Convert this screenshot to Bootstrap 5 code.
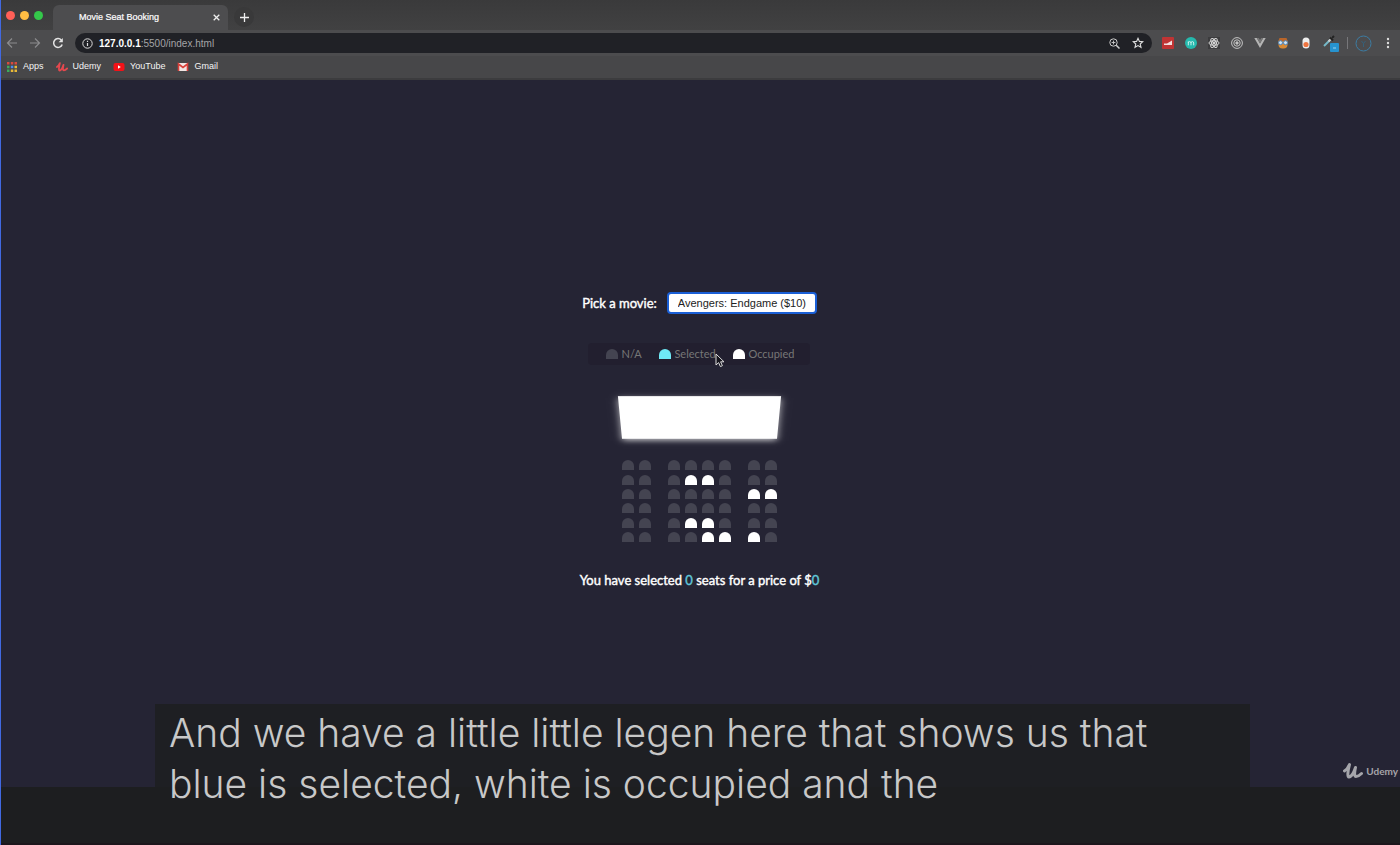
<!DOCTYPE html>
<html lang="en">
<head>
<meta charset="utf-8">
<meta name="viewport" content="width=device-width, initial-scale=1">
<title>Movie Seat Booking</title>
<link href="https://cdn.jsdelivr.net/npm/bootstrap@5.3.0/dist/css/bootstrap.min.css" rel="stylesheet">
<style>
  body { background: #1d1e20; border-left: 1px solid #4169e1; font-family: "Liberation Sans", Arial, sans-serif; overflow: hidden; }
  button { background: none; border: 0; padding: 0; color: inherit; line-height: 0; }
  svg { display: block; flex: none; }
  .tab-strip { height: 30px; background: linear-gradient(#3a3a3b, #414142); padding-left: 5px; }
  .lights { gap: 5px; width: 47px; }
  .light { width: 9px; height: 9px; border-radius: 50%; }
  .browser-tab { width: 175px; height: 25px; background: #4d4d4f; border-radius: 6px 6px 0 0; padding: 0 8px 0 26px; color: #fff; font-size: 9px; -webkit-text-stroke: .2px #fff; }
  .new-tab { width: 20px; height: 20px; border-radius: 50%; background: #39393a; margin: 4px 0 0 6px; }
  .tool-row { height: 26px; background: #4c4c4e; color: #d0d0d0; padding: 0 7px 0 5px; }
  .tool-buttons { gap: 11px; }
  .address { height: 20px; border-radius: 10px; background: #202126; padding: 0 8px 0 7px; font-size: 10px; margin-left: 11px; }
  .address label { color: #fff; font-weight: 700; margin-left: 6px; }
  .address input { background: none; border: 0; outline: 0; padding: 0; color: #a4a4a7; min-width: 0; }
  .extensions { gap: 11px; margin-left: 10px; }
  .account { gap: 7px; margin-left: 8px; }
  .marks-row { height: 24px; background: #474749; border-bottom: 2px solid #3c3c3e; padding-left: 5px; gap: 12px; font-size: 9px; }
  .marks-row a { color: #f4f4f4; gap: 5px; }
  .site { background: #252434; color: #fff; font-family: Lato, "Liberation Sans", sans-serif; font-size: 13px; }
  .strong-text { font-weight: 400; -webkit-text-stroke: .4px currentColor; }
  .booking { margin: 16px 2px 0 0; }
  .movie-select { appearance: none; width: 150px; height: 22px; border: 2px solid #1a5fd6; border-radius: 4px; background: #fff; color: #222; padding: 0 0 0 9px; margin-left: 10px; font-family: "Liberation Sans", Arial, sans-serif; font-size: 11px; outline: 0; }
  .legend-box { width: 222px; height: 22px; margin: 29px 0 23px; padding: 0 16px 0 18px; background: #221f2f; border-radius: 4px; color: #777; font-size: 11px; }
  .legend-box li { gap: 3px; }
  .pointer { left: 127px; top: 10px; }
  .stage { perspective: 830px; }
  .screen { width: 159px; height: 60px; background: #fff; transform: rotateX(-45deg); box-shadow: 0 3px 8px rgba(255,255,255,.7); }
  .seats { height: 82px; margin: 12px 0 29px; }
  .seat-line { gap: 5px; }
  .seat { appearance: none; width: 12px; height: 10px; margin: 0; background: #444451; border-radius: 6px 6px 0 0; }
  .seat:checked, .seat.is-selected { background: #6feaf6; }
  .seat.is-occupied { background: #fff; }
  .seat-line .seat:nth-child(2), .seat-line .seat:nth-child(6) { margin-right: 12px; }
  .amount { color: #5fc6d8; }
  .watermark { right: 2px; bottom: 7px; gap: 3px; color: #a5a5aa; font-size: 10px; font-weight: 700; }
  .below { height: 58px; border-bottom: 2px solid #1c161c; }
  .subtitle { left: 154px; right: 150px; bottom: 2px; height: 139px; padding: 3px 14px; background: linear-gradient(#1e1f23 83px, #1d1e20 83px); color: #c8c8c8; font-family: Inter, "Liberation Sans", sans-serif; font-weight: 300; font-size: 39px; line-height: 51px; }
</style>
<script src="https://cdn.jsdelivr.net/npm/bootstrap@5.3.0/dist/js/bootstrap.bundle.min.js"></script>
</head>
<body class="vh-100 d-flex flex-column position-relative">
<header>
  <div class="tab-strip d-flex align-items-end">
    <div class="lights d-flex align-self-center">
      <span class="light" style="background:#ff5f57"></span><span class="light" style="background:#ffbd43"></span><span class="light" style="background:#34c84a"></span>
    </div>
    <div class="browser-tab d-flex align-items-center justify-content-between">
      <span>Movie Seat Booking</span>
      <button type="button" aria-label="Close tab"><svg width="7" height="7" viewBox="0 0 7 7" stroke="#eee" stroke-width="1.3"><path d="M.7.7l5.6 5.6M6.3.7L.7 6.3"/></svg></button>
    </div>
    <button type="button" class="new-tab d-flex align-items-center justify-content-center align-self-center" aria-label="New tab"><svg width="9" height="9" viewBox="0 0 9 9" stroke="#eee" stroke-width="1.3"><path d="M4.5 0v9M0 4.5h9"/></svg></button>
  </div>
  <div class="tool-row d-flex align-items-center">
    <div class="tool-buttons d-flex align-items-center">
      <button type="button" aria-label="Back"><svg width="12" height="12" viewBox="0 0 12 12" fill="none" stroke="#8b8b8d" stroke-width="1.2"><path d="M11 6H2M6 1.500L1.500 6 6 10.500"/></svg></button>
      <button type="button" aria-label="Forward"><svg width="12" height="12" viewBox="0 0 12 12" fill="none" stroke="#8b8b8d" stroke-width="1.2"><path d="M1 6h9M6 1.500L10.500 6 6 10.500"/></svg></button>
      <button type="button" aria-label="Reload"><svg width="12" height="12" viewBox="0 0 12 12" fill="none" stroke="#e4e4e4" stroke-width="1.5"><path d="M10.200 7.500A4.400 4.400 0 1 1 9.300 3"/><path d="M10.800 1v4.200H6.600z" fill="#e4e4e4" stroke="none"/></svg></button>
    </div>
    <div class="address d-flex align-items-center flex-grow-1">
      <svg width="11" height="11" viewBox="0 0 11 11" fill="none" stroke="#ddd"><circle cx="5.500" cy="5.500" r="4.700"/><path d="M5.500 5v3M5.500 2.700v1.200" stroke-width="1.200"/></svg>
      <label for="url">127.0.0.1</label><input id="url" class="flex-grow-1" value=":5500/index.html">
      <button type="button" aria-label="Zoom"><svg width="11" height="11" viewBox="0 0 11 11" fill="none" stroke="#ccc"><circle cx="4.500" cy="4.500" r="3.700"/><path d="M7.200 7.200l3.300 3.300" stroke-width="1.500"/><path d="M4.500 2.600v3.800M2.600 4.500h3.800" stroke-width=".9"/></svg></button>
      <button type="button" class="ms-2 ps-1" aria-label="Bookmark"><svg width="12" height="12" viewBox="0 0 12 12" fill="none" stroke="#ddd" stroke-width="1.100"><path d="M6 1.300l1.400 3.100 3.400.3-2.600 2.300.8 3.300L6 8.600l-3 1.700.8-3.300L1.200 4.700l3.400-.3z"/></svg></button>
    </div>
    <div class="extensions d-flex align-items-center">
      <button type="button" aria-label="Analytics"><svg width="12" height="12" viewBox="0 0 12 12"><rect width="12" height="12" rx="1" fill="#bf3434"/><path d="M2 8V6.500h3l5-3V8z" fill="#f4dede"/></svg></button>
      <button type="button" aria-label="Momentum"><svg width="12" height="12" viewBox="0 0 12 12"><circle cx="6" cy="6" r="6" fill="#25b9ad"/><path d="M3.300 8.300V4.500M3.300 6q0-1.400 1.350-1.400T6 6v2.300M6 6q0-1.400 1.350-1.400T8.700 6v2.300" fill="none" stroke="#c8f0ec"/></svg></button>
      <button type="button" aria-label="React tools"><svg width="12" height="12" viewBox="0 0 12 12" fill="none" stroke="#ddd" stroke-width=".9"><rect width="12" height="12" fill="#3c3c3e" stroke="none"/><ellipse cx="6" cy="6" rx="5" ry="2.200"/><ellipse cx="6" cy="6" rx="5" ry="2.200" transform="rotate(60 6 6)"/><ellipse cx="6" cy="6" rx="5" ry="2.200" transform="rotate(120 6 6)"/><circle cx="6" cy="6" r="1" fill="#ddd"/></svg></button>
      <button type="button" aria-label="Rings"><svg width="12" height="12" viewBox="0 0 12 12" fill="none" stroke="#c4c4c4"><circle cx="6" cy="6" r="5.400"/><circle cx="6" cy="6" r="3.200"/><circle cx="6" cy="6" r="1.200" fill="#c4c4c4"/></svg></button>
      <button type="button" aria-label="Vue tools"><svg width="12" height="12" viewBox="0 0 12 12"><path d="M.3 1h2.500L6 6.500 9.200 1h2.500L6 11z" fill="#b4b4b4"/><path d="M2.800 1h2L6 3l1.200-2h2L6 6.500z" fill="#777"/></svg></button>
      <button type="button" aria-label="Goggles"><svg width="12" height="12" viewBox="0 0 12 12"><rect x="1.500" y="1" width="9" height="10.500" rx="4" fill="#d88a35"/><path d="M2.500 1h7l1 3h-9z" fill="#b8652a"/><circle cx="3.500" cy="5.700" r="2" fill="#cfe3f3" stroke="#4b86bd"/><circle cx="8.500" cy="5.700" r="2" fill="#cfe3f3" stroke="#4b86bd"/></svg></button>
      <button type="button" aria-label="Egg"><svg width="12" height="12" viewBox="0 0 12 12"><rect x="2.500" y=".5" width="7" height="11" rx="3.500" fill="#eee"/><circle cx="6" cy="7.500" r="2.600" fill="#ee7440"/></svg></button>
      <button type="button" aria-label="Color picker"><svg width="16" height="18" viewBox="0 0 16 18"><path d="M1 12l6-6" stroke="#75b9c8" stroke-width="2"/><path d="M5.500 7.500l4-4" stroke="#ccc" stroke-width="2"/><path d="M7 3.500l3 3M9 4l2-2" stroke="#222" stroke-width="2"/><rect x="7" y="9" width="9" height="9" rx="1" fill="#2793cf"/><path d="M10 14h3" stroke="#9fd3ee"/></svg></button>
    </div>
    <div class="account d-flex align-items-center">
      <svg width="1" height="12"><rect width="1" height="12" fill="#77777a"/></svg>
      <button type="button" aria-label="Profile"><svg width="17" height="17" viewBox="0 0 17 17" fill="none" stroke="#3c7ca3"><circle cx="8.500" cy="8.500" r="7.500"/><path d="M6.500 6l2 2.500 2-2.500M8.500 8.500V12" stroke="#35607a"/></svg></button>
      <button type="button" class="ms-1" aria-label="Menu"><svg width="10" height="12" viewBox="0 0 10 12" fill="#ddd"><circle cx="5" cy="2" r="1.200"/><circle cx="5" cy="6" r="1.200"/><circle cx="5" cy="10" r="1.200"/></svg></button>
    </div>
  </div>
  <nav class="marks-row d-flex align-items-center">
    <a href="#" class="d-flex align-items-center text-decoration-none"><svg width="12" height="12" viewBox="0 0 12 12"><path d="M1 1h2.500v2.500H1zM8.500 1H11v2.500H8.500zM4.800 1h2.500v2.500H4.800z" fill="#d84b3c"/><path d="M1 4.700h2.500v2.500H1zM1 8.500h2.500V11H1z" fill="#3daa5c"/><path d="M4.800 4.700h2.500v2.500H4.800z" fill="#4d8cf0"/><path d="M8.500 4.700H11v2.500H8.500zM4.800 8.500h2.500V11H4.800zM8.500 8.500H11V11H8.500z" fill="#e8b938"/></svg><span>Apps</span></a>
    <a href="#" class="d-flex align-items-center text-decoration-none"><svg width="12" height="12" viewBox="0 0 20 18" fill="none" stroke="#e5484e" stroke-width="3" stroke-linecap="round" stroke-linejoin="round"><path d="M1.500 9Q4.500 7 6.500 2.500 3.500 14.500 6 15q3.500-.5 6.500-9.500-2 9 .5 9 2.500 0 5.500-3"/></svg><span>Udemy</span></a>
    <a href="#" class="d-flex align-items-center text-decoration-none"><svg width="12" height="12" viewBox="0 0 12 12"><rect x=".5" y="2" width="11" height="8" rx="2" fill="#f31218"/><path d="M5 4.300v3.400L7.800 6z" fill="#fff"/></svg><span>YouTube</span></a>
    <a href="#" class="d-flex align-items-center text-decoration-none"><svg width="12" height="12" viewBox="0 0 12 12"><path d="M1 2h10v8H1z" fill="#f0e6e4"/><path d="M1.500 10V3L6 6.500 10.500 3v7" fill="none" stroke="#d8403a" stroke-width="1.600"/></svg><span>Gmail</span></a>
  </nav>
</header>
<main class="site flex-grow-1 position-relative d-flex justify-content-center align-items-center">
  <div class="booking d-flex flex-column align-items-center">
    <div class="d-flex align-items-center">
      <label for="movie" class="strong-text">Pick a movie:</label>
      <select id="movie" class="movie-select">
        <option value="10">Avengers: Endgame ($10)</option>
      </select>
    </div>
    <ul class="legend-box list-unstyled d-flex align-items-center justify-content-between position-relative">
      <li class="d-flex align-items-center"><span class="seat"></span>N/A</li>
      <li class="d-flex align-items-center"><span class="seat is-selected"></span>Selected</li>
      <li class="d-flex align-items-center"><span class="seat is-occupied"></span>Occupied</li>
      <svg class="pointer position-absolute" width="10" height="15" viewBox="0 0 10 15"><path d="M1 1v11l2.600-2.400 1.800 4 2-.9-1.800-3.900H9z" fill="#16151d" stroke="#ddd"/></svg>
    </ul>
    <div class="stage"><div class="screen"></div></div>
    <div class="seats d-flex flex-column justify-content-between" id="seats"></div>
    <p class="m-0 strong-text">You have selected <span class="amount" id="count">0</span> seats for a price of $<span class="amount" id="total">0</span></p>
  </div>
  <div class="watermark position-absolute d-flex align-items-center">
    <svg width="20" height="18" viewBox="0 0 20 18" fill="none" stroke="#a5a5aa" stroke-width="3" stroke-linecap="round" stroke-linejoin="round"><path d="M1.500 9Q4.500 7 6.500 2.500 3.500 14.500 6 15q3.500-.5 6.500-9.500-2 9 .5 9 2.500 0 5.500-3"/></svg><span>Udemy</span>
  </div>
</main>
<div class="below"></div>
<div class="subtitle position-absolute">And we have a little little legen here that shows us that blue is selected, white is occupied and the</div>
<script>
  const rows = ["00000000", "00011000", "00000011", "00000000", "00011000", "00001110"];
  const seats = document.getElementById("seats");
  rows.forEach((row, r) => {
    const line = document.createElement("div");
    line.className = "seat-line d-flex";
    [...row].forEach((taken, c) => {
      const seat = document.createElement("input");
      seat.type = "checkbox";
      seat.className = "seat";
      seat.setAttribute("aria-label", `Row ${r + 1} seat ${c + 1}`);
      if (taken === "1") { seat.disabled = true; seat.classList.add("is-occupied"); }
      line.append(seat);
    });
    seats.append(line);
  });
  seats.addEventListener("change", () => {
    const n = seats.querySelectorAll(":checked").length;
    document.getElementById("count").textContent = n;
    document.getElementById("total").textContent = n * document.getElementById("movie").value;
  });
</script>
</body>
</html>
